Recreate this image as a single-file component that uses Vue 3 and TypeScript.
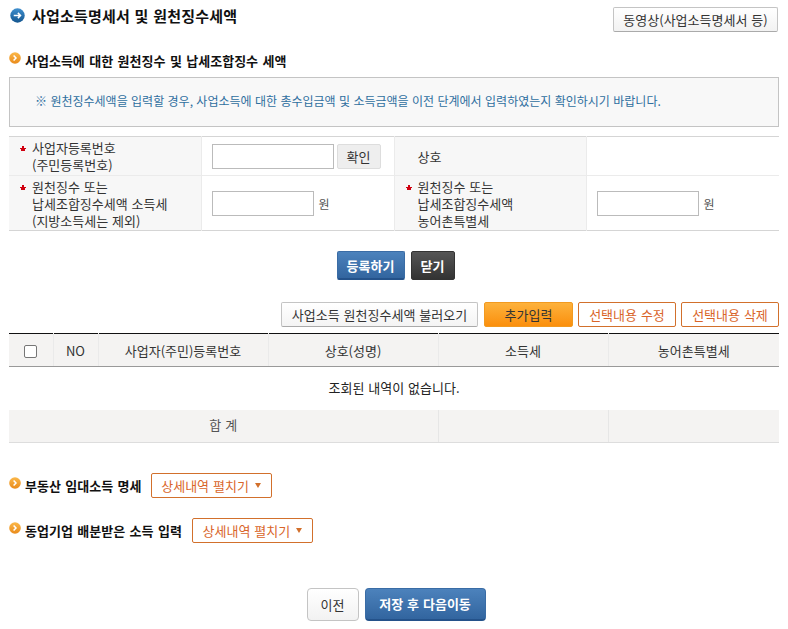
<script setup lang="ts">
interface HeadCol {
  label: string;
  width: number;
}

const headCols: HeadCol[] = [
  { label: "NO", width: 45 },
  { label: "사업자(주민)등록번호", width: 170 },
  { label: "상호(성명)", width: 170 },
  { label: "소득세", width: 170 },
  { label: "농어촌특별세", width: 171 },
];
</script>

<template>
  <div class="page">
    <div class="titleRow">
      <h1 class="title">
        <svg class="titleIcon" width="15" height="15" viewBox="0 0 16 16">
          <defs>
            <linearGradient id="blueBall" x1="0" y1="0" x2="0" y2="1">
              <stop offset="0" stop-color="#3f8fce" />
              <stop offset="1" stop-color="#14568f" />
            </linearGradient>
          </defs>
          <circle cx="8" cy="8" r="7.7" fill="url(#blueBall)" />
          <path d="M4 8h7M8.4 5.2 11.2 8l-2.8 2.8" fill="none" stroke="#fff" stroke-width="1.6" />
        </svg>
        사업소득명세서 및 원천징수세액
      </h1>
      <button class="btn btnVideo">동영상(사업소득명세서 등)</button>
    </div>

    <h2 class="section first">
      <svg class="ball" width="12" height="12" viewBox="0 0 12 12">
        <defs>
          <linearGradient id="orangeBall" x1="0" y1="0" x2="0" y2="1">
            <stop offset="0" stop-color="#fbb84a" />
            <stop offset="1" stop-color="#e98a1a" />
          </linearGradient>
        </defs>
        <circle cx="6" cy="6" r="5.8" fill="url(#orangeBall)" />
        <path d="M4.6 3.4 7 6 4.6 8.6" fill="none" stroke="#fff" stroke-width="1.5" />
      </svg>
      사업소득에 대한 원천징수 및 납세조합징수 세액
    </h2>

    <div class="infoBox">
      ※ 원천징수세액을 입력할 경우, 사업소득에 대한 총수입금액 및 소득금액을 이전 단계에서 입력하였는지 확인하시기 바랍니다.
    </div>

    <table class="formTable">
      <colgroup>
        <col style="width: 192px" />
        <col style="width: 193px" />
        <col style="width: 192px" />
        <col style="width: 193px" />
      </colgroup>
      <tbody>
        <tr class="rowTop">
          <th>
            <svg class="star" width="6" height="5" viewBox="0 0 6 5"><path d="M2 0h2v2h2v1H5v2H1V3H0V2h2z" fill="#d00010" /></svg>
            사업자등록번호<br />(주민등록번호)
          </th>
          <td>
            <div class="field">
              <input class="input inputWide" type="text" />
              <button class="btnCheck">확인</button>
            </div>
          </td>
          <th>상호</th>
          <td></td>
        </tr>
        <tr class="rowBottom">
          <th>
            <svg class="star" width="6" height="5" viewBox="0 0 6 5"><path d="M2 0h2v2h2v1H5v2H1V3H0V2h2z" fill="#d00010" /></svg>
            원천징수 또는<br />납세조합징수세액 소득세<br />(지방소득세는 제외)
          </th>
          <td>
            <div class="field">
              <input class="input" type="text" />
              <span class="unit">원</span>
            </div>
          </td>
          <th>
            <svg class="star" width="6" height="5" viewBox="0 0 6 5"><path d="M2 0h2v2h2v1H5v2H1V3H0V2h2z" fill="#d00010" /></svg>
            원천징수 또는<br />납세조합징수세액<br />농어촌특별세
          </th>
          <td>
            <div class="field">
              <input class="input" type="text" />
              <span class="unit">원</span>
            </div>
          </td>
        </tr>
      </tbody>
    </table>

    <div class="actions">
      <button class="btn btnBlue btnRegister">등록하기</button>
      <button class="btn btnDark">닫기</button>
    </div>

    <div class="toolbar">
      <button class="btn btnLoad">사업소득 원천징수세액 불러오기</button>
      <button class="btn btnOrange">추가입력</button>
      <button class="btn btnLine btnEdit">선택내용 수정</button>
      <button class="btn btnLine btnEdit">선택내용 삭제</button>
    </div>

    <table class="listTable">
      <colgroup>
        <col style="width: 44px" />
        <col v-for="col in headCols" :key="col.label" :style="{ width: col.width + 'px' }" />
      </colgroup>
      <thead>
        <tr>
          <th><span class="check"></span></th>
          <th v-for="col in headCols" :key="col.label">{{ col.label }}</th>
        </tr>
      </thead>
      <tbody>
        <tr class="emptyRow">
          <td colspan="6">조회된 내역이 없습니다.</td>
        </tr>
      </tbody>
      <tfoot>
        <tr>
          <td colspan="4">합 계</td>
          <td></td>
          <td></td>
        </tr>
      </tfoot>
    </table>

    <div class="detailRow firstDetail">
      <h2 class="section">
        <svg class="ball" width="12" height="12" viewBox="0 0 12 12">
          <circle cx="6" cy="6" r="5.8" fill="url(#orangeBall)" />
          <path d="M4.6 3.4 7 6 4.6 8.6" fill="none" stroke="#fff" stroke-width="1.5" />
        </svg>
        부동산 임대소득 명세
      </h2>
      <button class="btn btnLine btnDetail">상세내역 펼치기<i class="caret"></i></button>
    </div>

    <div class="detailRow">
      <h2 class="section">
        <svg class="ball" width="12" height="12" viewBox="0 0 12 12">
          <circle cx="6" cy="6" r="5.8" fill="url(#orangeBall)" />
          <path d="M4.6 3.4 7 6 4.6 8.6" fill="none" stroke="#fff" stroke-width="1.5" />
        </svg>
        동업기업 배분받은 소득 입력
      </h2>
      <button class="btn btnLine btnDetail">상세내역 펼치기<i class="caret"></i></button>
    </div>

    <div class="footer">
      <button class="btn btnPrev">이전</button>
      <button class="btn btnBlue btnNext">저장 후 다음이동</button>
    </div>
  </div>
</template>

<style scoped>
.page {
  width: 770px;
  padding: 7px 9px 0;
  font-family: "Noto Sans CJK KR", "Liberation Sans", sans-serif;
  font-size: 13px;
  color: #333;
  word-spacing: 1px;
}

.titleRow {
  display: flex;
  justify-content: space-between;
  height: 25px;
}
.title {
  display: flex;
  align-items: center;
  margin: -2px 0 0;
  height: 20px;
  font-size: 15px;
  font-weight: 700;
  color: #111;
  letter-spacing: 0.2px;
}
.titleIcon {
  margin: 0 7px 0 1px;
}

.section {
  display: flex;
  align-items: center;
  margin: 0;
  font-size: 13px;
  font-weight: 700;
  color: #111;
  word-spacing: 1.5px;
}
.section.first {
  margin-top: 17px;
  height: 22px;
}
.ball {
  margin-right: 4px;
  position: relative;
  top: -2px;
}

.infoBox {
  margin-top: 6px;
  box-sizing: border-box;
  height: 50px;
  padding-left: 25px;
  line-height: 45px;
  border: 1px solid #c4c4c4;
  background: #f8f8f8;
  font-size: 12px;
  color: #2f6f9f;
  white-space: nowrap;
  word-spacing: 0.7px;
}

.formTable,
.listTable {
  width: 770px;
  table-layout: fixed;
  border-collapse: collapse;
}

.formTable {
  margin-top: 9px;
  border-top: 1px solid #d5d5d5;
  border-bottom: 1px solid #d5d5d5;
}
.formTable th,
.formTable td {
  padding: 0;
  border-right: 1px solid #ebebeb;
}
.formTable td:last-child {
  border-right: 0;
}
.formTable th {
  position: relative;
  padding-left: 23px;
  text-align: left;
  font-weight: 400;
  line-height: 17px;
  background: #f7f7f7;
  vertical-align: middle;
}
.formTable td {
  padding-left: 10px;
}
.rowTop {
  height: 39px;
  border-bottom: 1px solid #ebebeb;
}
.rowBottom {
  height: 55px;
}
.star {
  position: absolute;
  left: 11px;
  top: 9px;
}
.field {
  display: flex;
  align-items: center;
}
.input {
  box-sizing: border-box;
  width: 102px;
  height: 25px;
  padding: 0 4px;
  border: 1px solid #bbb;
  background: #fff;
}
.inputWide {
  width: 122px;
}
.unit {
  margin-left: 5px;
  font-size: 12px;
  color: #555;
}

.btn {
  box-sizing: border-box;
  padding: 0;
  font-family: inherit;
  font-size: 13px;
  word-spacing: 1px;
  border-radius: 2px;
  cursor: pointer;
}
.btnCheck {
  box-sizing: border-box;
  width: 44px;
  height: 25px;
  margin-left: 3px;
  padding: 0;
  font-family: inherit;
  font-size: 13px;
  color: #333;
  background: #eee;
  border: 1px solid #ddd;
  border-radius: 2px;
}
.btnVideo {
  width: 165px;
  height: 25px;
  margin-right: 1px;
  color: #333;
  border: 1px solid #c4c4c4;
  border-bottom-color: #aaa;
  background: linear-gradient(#fff, #f2f2f2);
}

.actions {
  display: flex;
  justify-content: center;
  gap: 6px;
  margin-top: 20px;
  padding-left: 3px;
}
.btnBlue {
  color: #fff;
  font-weight: 700;
  border: 1px solid #3a6ca5;
  border-bottom: 2px solid #24528a;
  background: linear-gradient(#4c82bc, #32659f);
}
.btnRegister {
  width: 68px;
  height: 29px;
}
.btnDark {
  width: 44px;
  height: 29px;
  color: #fff;
  font-weight: 700;
  border: 1px solid #333;
  background: linear-gradient(#555, #333);
}

.toolbar {
  display: flex;
  justify-content: flex-end;
  margin-top: 22px;
  height: 25px;
}
.btnLoad {
  width: 197px;
  color: #333;
  border: 1px solid #c4c4c4;
  border-bottom-color: #aaa;
  background: linear-gradient(#fff, #f4f4f4);
}
.btnOrange {
  width: 89px;
  margin-left: 6px;
  color: #333;
  border: 1px solid #f29a20;
  background: linear-gradient(#fdb23c, #fb8f0d);
}
.btnLine {
  color: #d9652a;
  border: 1px solid #d2702c;
  background: #fff;
}
.btnEdit {
  width: 98px;
  margin-left: 5px;
}

.listTable {
  margin-top: 6px;
  border-top: 1px solid #111;
}
.listTable th {
  height: 32px;
  padding: 0;
  font-weight: 400;
  background: #f4f3f2;
  border-right: 1px solid #eaeaea;
  border-bottom: 1px solid #999;
}
.listTable th:first-child {
  text-align: center;
}
.listTable th:last-child {
  border-right: 0;
}
.check {
  display: inline-block;
  box-sizing: border-box;
  width: 13px;
  height: 13px;
  vertical-align: middle;
  border: 1px solid #767676;
  border-radius: 2px;
  background: #fff;
}
.emptyRow td {
  height: 43px;
  padding: 0;
  line-height: 41px;
  vertical-align: top;
  text-align: center;
  font-size: 13px;
  color: #222;
}
.listTable tfoot td {
  box-sizing: border-box;
  height: 32px;
  padding: 0 0 2px;
  text-align: center;
  color: #555;
  background: #f4f3f2;
  border-right: 1px solid #e6e6e6;
  border-bottom: 1px solid #ddd;
}
.listTable tfoot td:last-child {
  border-right: 0;
}

.detailRow {
  display: flex;
  align-items: center;
  gap: 10px;
  height: 25px;
  margin-top: 20px;
}
.detailRow.firstDetail {
  gap: 9px;
  margin-top: 30px;
}
.btnDetail {
  display: inline-flex;
  align-items: center;
  justify-content: center;
  width: 121px;
  height: 25px;
}
.caret {
  width: 0;
  height: 0;
  margin-left: 6px;
  border-left: 3px solid transparent;
  border-right: 3px solid transparent;
  border-top: 5px solid #d2702c;
}

.footer {
  display: flex;
  justify-content: center;
  gap: 6px;
  margin-top: 45px;
  padding-left: 4px;
}
.btnPrev {
  width: 52px;
  height: 33px;
  color: #333;
  border: 1px solid #c4c4c4;
  border-radius: 4px;
  background: linear-gradient(#fff, #f2f2f2);
}
.btnNext {
  width: 121px;
  height: 33px;
  border-radius: 4px;
}
</style>
